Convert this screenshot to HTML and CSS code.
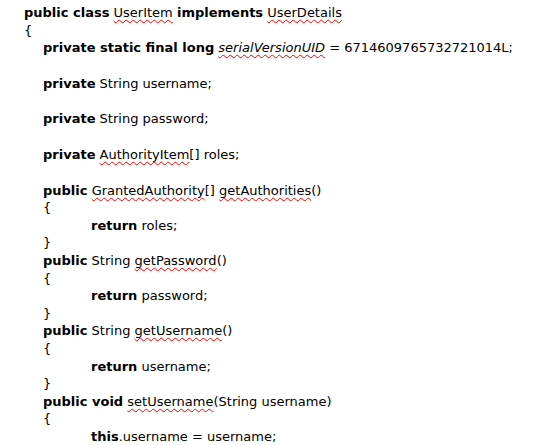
FILE: index.html
```html
<!DOCTYPE html>
<html>
<head>
<meta charset="utf-8">
<link rel="stylesheet" href="styles.css">
</head>
<body>
<div class="code">
  <div class="line"><b>public class</b> <span class="sp">UserItem</span> <b>implements</b> <span class="sp">UserDetails</span></div>
  <div class="line">{</div>
  <div class="line i1"><b>private static final long</b> <i class="sp">serialVersionUID</i> = 6714609765732721014L;</div>
  <div class="line blank"></div>
  <div class="line i1"><b>private</b> String username;</div>
  <div class="line blank"></div>
  <div class="line i1"><b>private</b> String password;</div>
  <div class="line blank"></div>
  <div class="line i1"><b>private</b> <span class="sp">AuthorityItem</span>[] roles;</div>
  <div class="line blank"></div>
  <div class="line i1"><b>public</b> <span class="sp">GrantedAuthority</span>[] <span class="sp">getAuthorities</span>()</div>
  <div class="line i1">{</div>
  <div class="line i2"><b>return</b> roles;</div>
  <div class="line i1">}</div>
  <div class="line i1"><b>public</b> String <span class="sp">getPassword</span>()</div>
  <div class="line i1">{</div>
  <div class="line i2"><b>return</b> password;</div>
  <div class="line i1">}</div>
  <div class="line i1"><b>public</b> String <span class="sp">getUsername</span>()</div>
  <div class="line i1">{</div>
  <div class="line i2"><b>return</b> username;</div>
  <div class="line i1">}</div>
  <div class="line i1"><b>public void</b> <span class="sp">setUsername</span>(String username)</div>
  <div class="line i1">{</div>
  <div class="line i2"><b>this</b>.username = username;</div>
</div>
</body>
</html>
```
FILE: styles.css
```css
html, body {
  margin: 0;
  padding: 0;
  background: #ffffff;
}
.code {
  padding: 4px 0 0 24px;
  font-family: "DejaVu Sans", "Liberation Sans", sans-serif;
  font-size: 13px;
  color: #000;
}
.line {
  height: 17.6px;
  line-height: 17.6px;
  white-space: pre;
}
.blank {
  height: 18px;
}
.i1 { padding-left: 19px; }
.i2 { padding-left: 67px; }
b { font-weight: bold; }
.sp {
  text-decoration: underline wavy #ff0000;
  text-decoration-thickness: 1px;
  text-underline-offset: 2px;
  text-decoration-skip-ink: none;
}
```
